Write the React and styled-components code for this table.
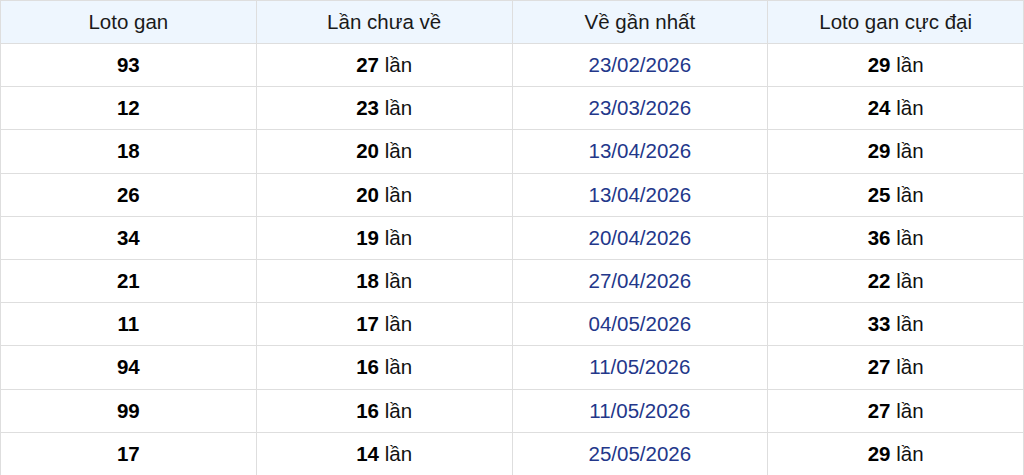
import React from "react";
import styled, { createGlobalStyle } from "styled-components";

const GlobalStyle = createGlobalStyle`
  body {
    margin: 0;
    background: #fff;
    font-family: "Liberation Sans", Arial, sans-serif;
  }
`;

const Table = styled.table`
  width: 100%;
  border-collapse: collapse;
  table-layout: fixed;
  font-size: 20.5px;
  color: #111;
`;

const Head = styled.th`
  height: 42px;
  padding: 0;
  font-weight: normal;
  background: #eef6fe;
  border: 1px solid #dedede;
  color: #1a1a1a;
`;

const Cell = styled.td`
  height: 42.2px;
  padding: 0;
  text-align: center;
  border: 1px solid #dedede;
  color: ${(p) => (p.$date ? "#23378a" : "#111")};
`;

const Num = styled.b`
  font-weight: bold;
  color: #000;
`;

const rows = [
  ["93", 27, "23/02/2026", 29],
  ["12", 23, "23/03/2026", 24],
  ["18", 20, "13/04/2026", 29],
  ["26", 20, "13/04/2026", 25],
  ["34", 19, "20/04/2026", 36],
  ["21", 18, "27/04/2026", 22],
  ["11", 17, "04/05/2026", 33],
  ["94", 16, "11/05/2026", 27],
  ["99", 16, "11/05/2026", 27],
  ["17", 14, "25/05/2026", 29],
];

export default function App() {
  return (
    <>
      <GlobalStyle />
      <Table>
        <thead>
          <tr>
            <Head>Loto gan</Head>
            <Head>Lần chưa về</Head>
            <Head>Về gần nhất</Head>
            <Head>Loto gan cực đại</Head>
          </tr>
        </thead>
        <tbody>
          {rows.map(([loto, miss, date, max]) => (
            <tr key={loto}>
              <Cell>
                <Num>{loto}</Num>
              </Cell>
              <Cell>
                <Num>{miss}</Num> lần
              </Cell>
              <Cell $date>{date}</Cell>
              <Cell>
                <Num>{max}</Num> lần
              </Cell>
            </tr>
          ))}
        </tbody>
      </Table>
    </>
  );
}
